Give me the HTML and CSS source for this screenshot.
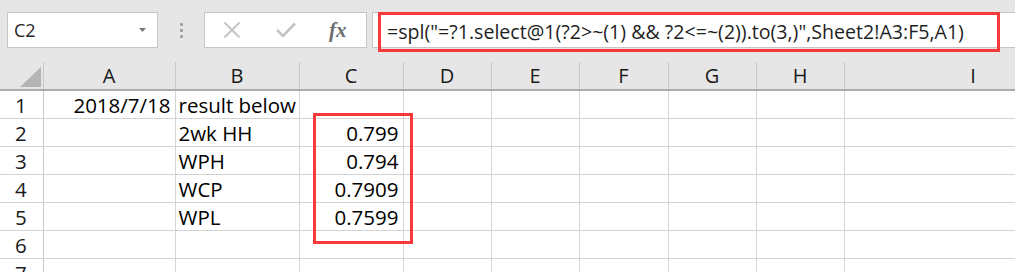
FILE: index.html
```html
<!DOCTYPE html>
<html lang="en">
<head>
    <meta charset="UTF-8">
    <title>Sheet1</title>
    <link rel="stylesheet" href="styles.css">
</head>
<body>
    <div class="formula-bar">
        <div class="name-box">
            <span class="cell-ref">C2</span>
            <svg class="drop" width="7" height="4" viewBox="0 0 7 4"><path d="M0 0 H7 L3.5 4 Z" fill="#7a7a7a"/></svg>
        </div>
        <div class="grip"><i></i><i></i><i></i></div>
        <div class="fx-box">
            <svg class="tool" width="18" height="16" viewBox="0 0 18 16">
                <path d="M1.5 0.5 L16.5 15.5 M16.5 0.5 L1.5 15.5" stroke="#c4c4c4" stroke-width="2" fill="none"/>
            </svg>
            <svg class="tool" width="20" height="16" viewBox="0 0 20 16">
                <path d="M1 8 L7 14 L19 1.5" stroke="#c4c4c4" stroke-width="2.6" fill="none"/>
            </svg>
            <span class="fx">fx</span>
        </div>
        <div class="formula-input">
            <span class="formula">=spl("=?1.select@1(?2&gt;~(1) &amp;&amp; ?2&lt;=~(2)).to(3,)",Sheet2!A3:F5,A1)</span>
        </div>
    </div>

    <div class="sheet">
        <table class="grid">
            <colgroup>
                <col class="c-hdr"><col class="c-a"><col class="c-b"><col class="c-c">
                <col class="c-d"><col class="c-d"><col class="c-f"><col class="c-d"><col class="c-d"><col class="c-i">
            </colgroup>
            <thead>
                <tr>
                    <th class="corner"><span class="tri"></span></th>
                    <th>A</th><th>B</th><th>C</th><th>D</th><th>E</th><th>F</th><th>G</th><th>H</th><th>I</th>
                </tr>
            </thead>
            <tbody>
                <tr><td class="rh">1</td><td class="num">2018/7/18</td><td>result below</td><td></td><td></td><td></td><td></td><td></td><td></td><td></td></tr>
                <tr><td class="rh">2</td><td></td><td>2wk HH</td><td class="num">0.799</td><td></td><td></td><td></td><td></td><td></td><td></td></tr>
                <tr><td class="rh">3</td><td></td><td>WPH</td><td class="num">0.794</td><td></td><td></td><td></td><td></td><td></td><td></td></tr>
                <tr><td class="rh">4</td><td></td><td>WCP</td><td class="num">0.7909</td><td></td><td></td><td></td><td></td><td></td><td></td></tr>
                <tr><td class="rh">5</td><td></td><td>WPL</td><td class="num">0.7599</td><td></td><td></td><td></td><td></td><td></td><td></td></tr>
                <tr><td class="rh">6</td><td></td><td></td><td></td><td></td><td></td><td></td><td></td><td></td><td></td></tr>
                <tr><td class="rh">7</td><td></td><td></td><td></td><td></td><td></td><td></td><td></td><td></td><td></td></tr>
            </tbody>
        </table>
        <div class="mark"></div>
    </div>
</body>
</html>
```

FILE: styles.css
```css
body {
    margin: 0;
    width: 1015px;
    height: 272px;
    overflow: hidden;
    background: #e6e6e6;
    font-family: 'Open Sans', 'Liberation Sans', sans-serif;
    color: #000;
}

.formula-bar {
    display: flex;
    align-items: flex-start;
    height: 62px;
    padding: 12px 0 0 7px;
    box-sizing: border-box;
}

.name-box {
    width: 151px;
    height: 36px;
    box-sizing: border-box;
    border: 1px solid #c6c6c6;
    background: #fff;
    display: flex;
    align-items: center;
    justify-content: space-between;
    padding: 0 11px 0 6px;
}

.cell-ref {
    font-size: 18px;
    color: #262626;
}

.drop {
    display: block;
}

.grip {
    width: 46px;
    height: 36px;
    display: flex;
    flex-direction: column;
    align-items: center;
    justify-content: center;
    gap: 3px;
}

.grip i {
    width: 3px;
    height: 3px;
    background: #a6a6a6;
}

.fx-box {
    width: 163px;
    height: 36px;
    box-sizing: border-box;
    border: 1px solid #c6c6c6;
    background: #fff;
    display: flex;
    align-items: center;
    padding-left: 18px;
    gap: 35px;
}

.tool {
    display: block;
}

.fx {
    font-family: 'Liberation Serif', 'Times New Roman', serif;
    font-style: italic;
    font-weight: bold;
    font-size: 21px;
    color: #6e6e6e;
    margin-left: -2px;
}

.formula-input {
    flex: 1;
    margin-left: 5px;
    height: 36px;
    box-sizing: border-box;
    border: 1px solid #c6c6c6;
    border-right: none;
    background: #fff;
    position: relative;
}

.formula {
    position: absolute;
    left: 5px;
    top: -1px;
    width: 622px;
    height: 40px;
    box-sizing: border-box;
    border: 3px solid #f8393b;
    padding-left: 6px;
    font-size: 19.6px;
    line-height: 33px;
    color: #1f1f1f;
    white-space: nowrap;
    overflow: hidden;
}

.sheet {
    position: relative;
    height: 210px;
    overflow: hidden;
}

.grid {
    border-collapse: collapse;
    table-layout: fixed;
    width: 1102px;
    font-size: 20.5px;
}

.c-hdr { width: 43px; }
.c-a { width: 132px; }
.c-b { width: 124px; }
.c-c { width: 104px; }
.c-d { width: 88px; }
.c-f { width: 89px; }
.c-i { width: 258px; }

.grid th {
    height: 27px;
    padding: 0;
    font-weight: normal;
    font-size: 20px;
    background: #e6e6e6;
    border-right: 1px solid #c8c8c8;
    border-bottom: 2px solid #ababab;
    text-align: center;
    vertical-align: bottom;
    line-height: 26px;
    color: #1a1a1a;
}

.grid th.corner {
    position: relative;
}

.tri {
    position: absolute;
    right: 2px;
    bottom: 2px;
    width: 0;
    height: 0;
    border-left: 21px solid transparent;
    border-bottom: 20px solid #b4b4b4;
}

.grid td {
    height: 27px;
    padding: 0 4px 0 3px;
    background: #fff;
    border-right: 1px solid #d4d4d4;
    border-bottom: 1px solid #d4d4d4;
    line-height: 25px;
    vertical-align: bottom;
    white-space: nowrap;
    overflow: hidden;
}

.grid td.rh {
    text-align: center;
    border-right-color: #c8c8c8;
    color: #1a1a1a;
}

.grid td.num {
    text-align: right;
}

.mark {
    position: absolute;
    left: 313px;
    top: 51px;
    width: 100px;
    height: 131px;
    box-sizing: border-box;
    border: 3px solid #f8393b;
}
```
